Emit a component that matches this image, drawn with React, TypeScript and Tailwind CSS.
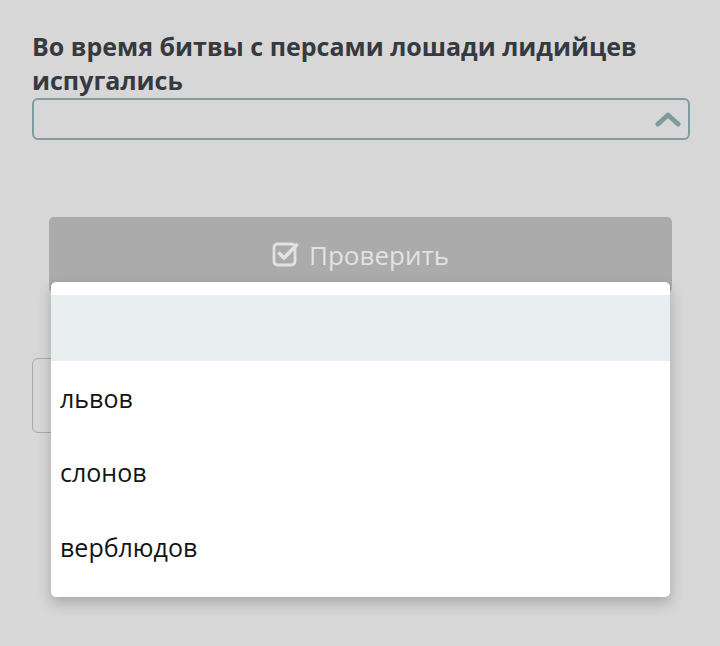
import React from 'react'

const options = ['львов', 'слонов', 'верблюдов']

export default function App() {
  return (
    <div className="relative w-[720px] h-[646px] overflow-hidden bg-[#d7d7d7]" style={{ fontFamily: '"Open Sans", "Noto Sans", sans-serif' }}>
      <div className="pl-[32px] pr-[30px] pt-[29px]">
        {/* Question */}
        <h2 className="text-[25px] leading-[34px] font-bold text-[#343a40]">
          Во время битвы с персами лошади лидийцев испугались
        </h2>

        {/* Select */}
        <div className="mt-[1px] h-[42px] rounded-[6px] border-2 border-[#819c9e] flex items-center justify-end pr-[7px]">
          <svg width="26" height="18" viewBox="0 0 26 18" fill="none">
            <path d="M3 14 L13 5 L23 14" stroke="#7f9a9c" strokeWidth="5" strokeLinecap="round" strokeLinejoin="round" />
          </svg>
        </div>

        {/* Check button */}
        <div className="mt-[77px] ml-[17px] mr-[18px] h-[76px] rounded-[5px] bg-[#ababab] flex items-center justify-center gap-[9px] text-[#e2e2e2]">
          <svg width="28" height="28" viewBox="0 0 28 28" fill="none" className="mt-[-2px]">
            <rect x="2" y="4" width="21" height="21" rx="3.5" stroke="#e2e2e2" strokeWidth="2.8" />
            <path d="M7.5 13.5 L12 18 L24.5 5" stroke="#e2e2e2" strokeWidth="3.8" strokeLinecap="round" strokeLinejoin="round" />
          </svg>
          <span className="text-[26px] leading-none">Проверить</span>
        </div>

        {/* Feedback box (hidden below dropdown) */}
        <div className="mt-[65px] w-[400px] h-[75px] rounded-[6px] border border-[#a9a9a9]" />
      </div>

      {/* Open dropdown list */}
      <div className="absolute left-[51px] top-[282px] w-[619px] h-[315px] bg-white rounded-[5px] shadow-[0_6px_14px_rgba(0,0,0,0.22)] pt-[13px]">
        <div className="h-[66px] bg-[#e9eff1]" />
        {options.map((o) => (
          <div key={o} className="h-[74.5px] flex items-center px-[9px] text-[25px] text-[#141414]">
            {o}
          </div>
        ))}
      </div>
    </div>
  )
}
